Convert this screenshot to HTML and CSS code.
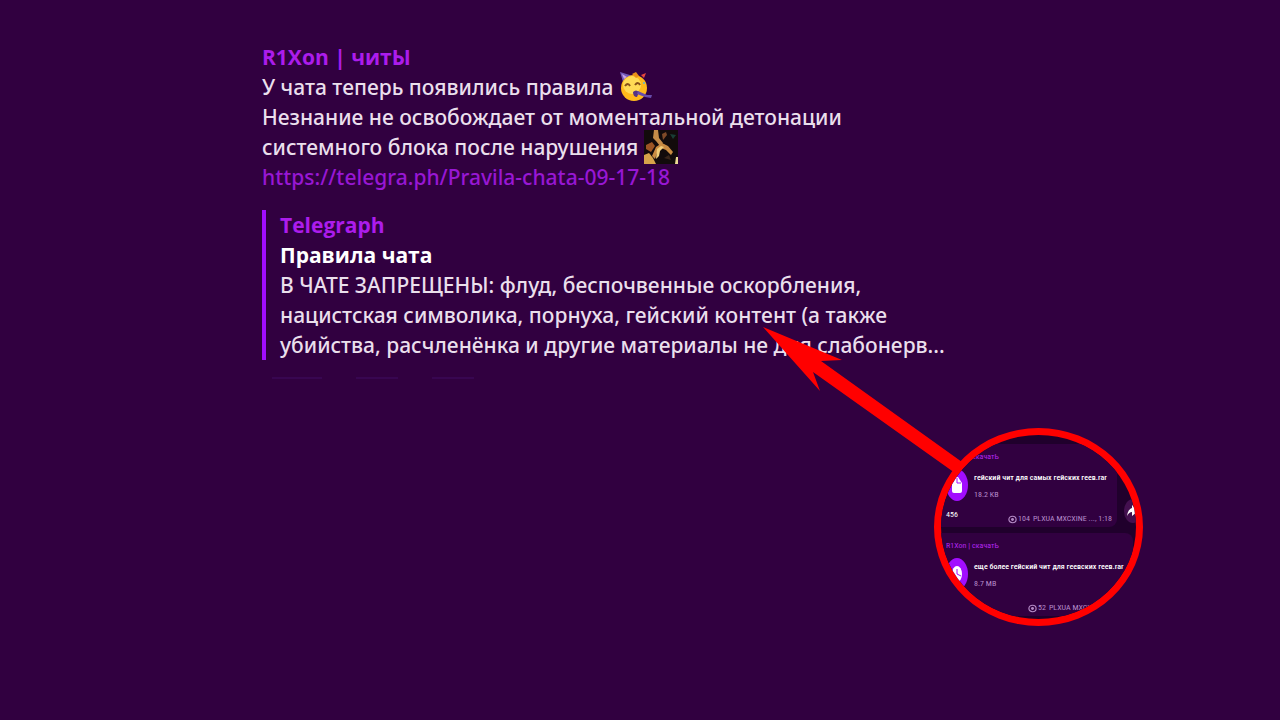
FILE: index.html
```html
<!DOCTYPE html>
<html lang="ru">
<head>
<meta charset="utf-8">
<title>R1Xon | читЫ</title>
<link rel="stylesheet" href="styles.css">
</head>
<body>
<main class="scene">
  <article class="message">
    <h1 class="sender">R1Xon | читЫ</h1>
    <p class="line">У чата теперь появились правила
      <svg class="emoji" viewBox="0 0 34 32" role="img" aria-label="праздник">
        <path d="M1 1l13 4-9 9z" fill="#7259b8"/>
        <path d="M3 3l5 3-3 2z" fill="#c9a3e8"/>
        <circle cx="15" cy="17" r="13" fill="#ffb91c"/>
        <circle cx="13" cy="14" r="9" fill="#ffda55"/>
        <path d="M13 3l4-2 3 4-3 2z" fill="#e99018"/>
        <path d="M22 4l5-2-2 5z" fill="#e8473e"/>
        <path d="M6 15q3-4 5 0M16 14q3-4 5 0" fill="none" stroke="#875018" stroke-width="2"/>
        <path d="M14 21q3-3 6 0l-2 5q-4 0-4-5z" fill="#553384"/>
        <path d="M19 20l9 4 5 0-1 3-6-1-8-3z" fill="#674cab"/>
        <circle cx="25" cy="12" r="1" fill="#5bb6d4"/>
      </svg>
    </p>
    <p class="line">Незнание не освобождает от моментальной детонации</p>
    <p class="line">системного блока после нарушения
      <svg class="sticker" viewBox="0 0 34 34" role="img" aria-label="стикер">
        <path d="M0 0h34v34H0z" fill="#120b0b"/>
        <path d="M0 25l5-2 4 5 3 6H0z" fill="#d6a34a"/>
        <path d="M10 0h4l1 8 4 5-3 3-4-5-3-3z" fill="#c58c49"/>
        <path d="M2 15l6-3 3 4-4 6-5-3z" fill="#9c5525"/>
        <path d="M8 26l4-9 6-4 6 3 5 6-2 3-5-5-5-2-4 5-2 6z" fill="#c98b42"/>
        <path d="M13 19l4-3 3 1-4 4-1 5-3 3z" fill="#f0cc79"/>
        <path d="M18 4l4-2 1 3-4 5z" fill="#7f4a28"/>
        <path d="M26 4l6 1-3 4z" fill="#193d35"/>
        <path d="M20 28l5-3 2 5z" fill="#38251a"/>
        <path d="M32 27h2v7h-3z" fill="#ead994"/>
      </svg>
    </p>
    <p class="line"><a class="link" href="https://telegra.ph/Pravila-chata-09-17-18">https://telegra.ph/Pravila-chata-09-17-18</a></p>
    <section class="preview">
      <p class="site">Telegraph</p>
      <h2 class="title">Правила чата</h2>
      <p class="line">В ЧАТЕ ЗАПРЕЩЕНЫ: флуд, беспочвенные оскорбления,</p>
      <p class="line">нацистская символика, порнуха, гейский контент (а также</p>
      <p class="line">убийства, расчленёнка и другие материалы не для слабонерв...</p>
    </section>
    <div class="traces"><i class="trace trace-long"></i><i class="trace"></i><i class="trace"></i></div>
  </article>

  <svg class="arrow" viewBox="0 0 200 148" aria-hidden="true">
    <path d="M0 2L79 35 58 36 199 137 192 148 50 47 57 66z" fill="#f00"/>
  </svg>

  <aside class="lens">
    <section class="card card-first">
      <p class="card-sender">R1Xon | скачатЬ</p>
      <div class="file">
        <svg class="file-icon" viewBox="0 0 22 32" aria-hidden="true">
          <ellipse cx="11" cy="16" rx="11" ry="16" fill="#a20dff"/>
          <path d="M6 15l4-7h2l4 6v8q0 2-2 2H8q-2 0-2-2z" fill="#fff"/>
          <path d="M11 9v5h4" fill="none" stroke="#a20dff"/>
        </svg>
        <div class="file-text">
          <p class="file-name">гейский чит для самых гейских геев.rar</p>
          <p class="file-size">18.2 KB</p>
        </div>
      </div>
      <footer class="foot">
        <p class="caption">456</p>
        <p class="meta">
          <svg class="eye" viewBox="0 0 10 10" aria-hidden="true"><ellipse cx="5" cy="5" rx="4" ry="3.6" fill="none" stroke="#b58bc6" stroke-width="1.3"/><circle cx="5" cy="5" r="1.6" fill="#b58bc6"/></svg>
          <span>104</span><span class="author">PLXUA MXCXINE ..., 1:18</span>
        </p>
      </footer>
    </section>
    <section class="card">
      <p class="card-sender">R1Xon | скачатЬ</p>
      <div class="file">
        <svg class="file-icon" viewBox="0 0 22 32" aria-hidden="true">
          <ellipse cx="11" cy="16" rx="11" ry="16" fill="#a20dff"/>
          <ellipse cx="11" cy="16" rx="5" ry="8" fill="#fff"/>
          <path d="M11 11v5l4 2" fill="none" stroke="#a20dff"/>
        </svg>
        <div class="file-text">
          <p class="file-name">еще более гейский чит для геевских геев.rar</p>
          <p class="file-size">8.7 MB</p>
        </div>
      </div>
      <footer class="foot">
        <p class="meta">
          <svg class="eye" viewBox="0 0 10 10" aria-hidden="true"><ellipse cx="5" cy="5" rx="4" ry="3.6" fill="none" stroke="#b58bc6" stroke-width="1.3"/><circle cx="5" cy="5" r="1.6" fill="#b58bc6"/></svg>
          <span>52</span><span class="author">PLXUA MXCXINE ..., 1:18</span>
        </p>
      </footer>
    </section>
    <button class="share" type="button" aria-label="Поделиться">
      <svg class="share-icon" viewBox="0 0 18 24" aria-hidden="true"><path d="M3 17q1-7 5-8V6l6 6-6 5v-4q-3 0-5 4z" fill="#fff"/></svg>
    </button>
  </aside>
</main>
</body>
</html>
```
FILE: styles.css
```css
* { box-sizing: border-box; }

body {
  margin: 0;
  background: #310040;
  color: #eadfec;
  font-family: "Noto Sans", "Open Sans", sans-serif;
}

h1, h2, p { margin: 0; }

.scene {
  position: relative;
  min-height: 100vh;
  padding: 42px 262px;
}

.message {
  font-size: 21px;
  font-weight: 500;
  line-height: 30px;
  white-space: nowrap;
}

.sender, .site, .title {
  font-family: "Open Sans", sans-serif;
  font-size: 21px;
  line-height: 30px;
  font-weight: 700;
}

.sender, .site { color: #ac1cec; }
.title { color: #fff; }
.line { height: 30px; }

.link {
  color: #9817d4;
  text-decoration: none;
}

.emoji, .sticker {
  width: 34px;
  height: 34px;
  margin: -8px 0;
  vertical-align: -1px;
}

.preview {
  margin-top: 18px;
  padding-left: 14px;
  border-left: 4px solid #a20dff;
}

.traces {
  display: flex;
  gap: 34px;
  padding: 17px 10px;
}

.trace {
  width: 42px;
  height: 2px;
  background: #380651;
}

.trace-long { width: 50px; }

.arrow {
  position: absolute;
  left: 763px;
  top: 325px;
  width: 200px;
  height: 148px;
}

.lens {
  position: absolute;
  left: 934px;
  top: 428px;
  display: flex;
  flex-direction: column;
  gap: 6px;
  width: 209px;
  height: 198px;
  padding-top: 9px;
  border: 7px solid #f00;
  border-radius: 50%;
  background: #20002c;
  overflow: hidden;
  font-family: "Roboto Condensed", Roboto, sans-serif;
  font-size: 8px;
  line-height: 12px;
  white-space: nowrap;
}

.card {
  flex: none;
  height: 83px;
  margin-right: 3px;
  padding: 7px 5px 0;
  border-radius: 0 8px 8px 0;
  background: #310040;
}

.card-first { margin-right: 19px; }
.card-sender { color: #b526f0; }

.file {
  display: flex;
  gap: 6px;
  margin-top: 6px;
}

.file-icon {
  flex: none;
  width: 22px;
  height: 32px;
}

.file-text { line-height: 17px; }

.file-name {
  color: #fff;
  font-weight: 500;
}

.file-size, .meta { color: #b78ccb; }

.foot {
  display: flex;
  justify-content: flex-end;
  margin-top: 6px;
}

.caption {
  margin-right: auto;
  color: #fff;
}

.meta {
  display: flex;
  align-items: center;
  gap: 1px;
  padding-top: 4px;
}

.author { padding-left: 2px; }

.eye {
  width: 9px;
  height: 9px;
}

.share {
  position: absolute;
  right: -6px;
  top: 64px;
  width: 18px;
  height: 24px;
  padding: 0;
  border: 0;
  border-radius: 50%;
  background: #43104f;
}

.share-icon {
  display: block;
  width: 18px;
  height: 24px;
}
```
